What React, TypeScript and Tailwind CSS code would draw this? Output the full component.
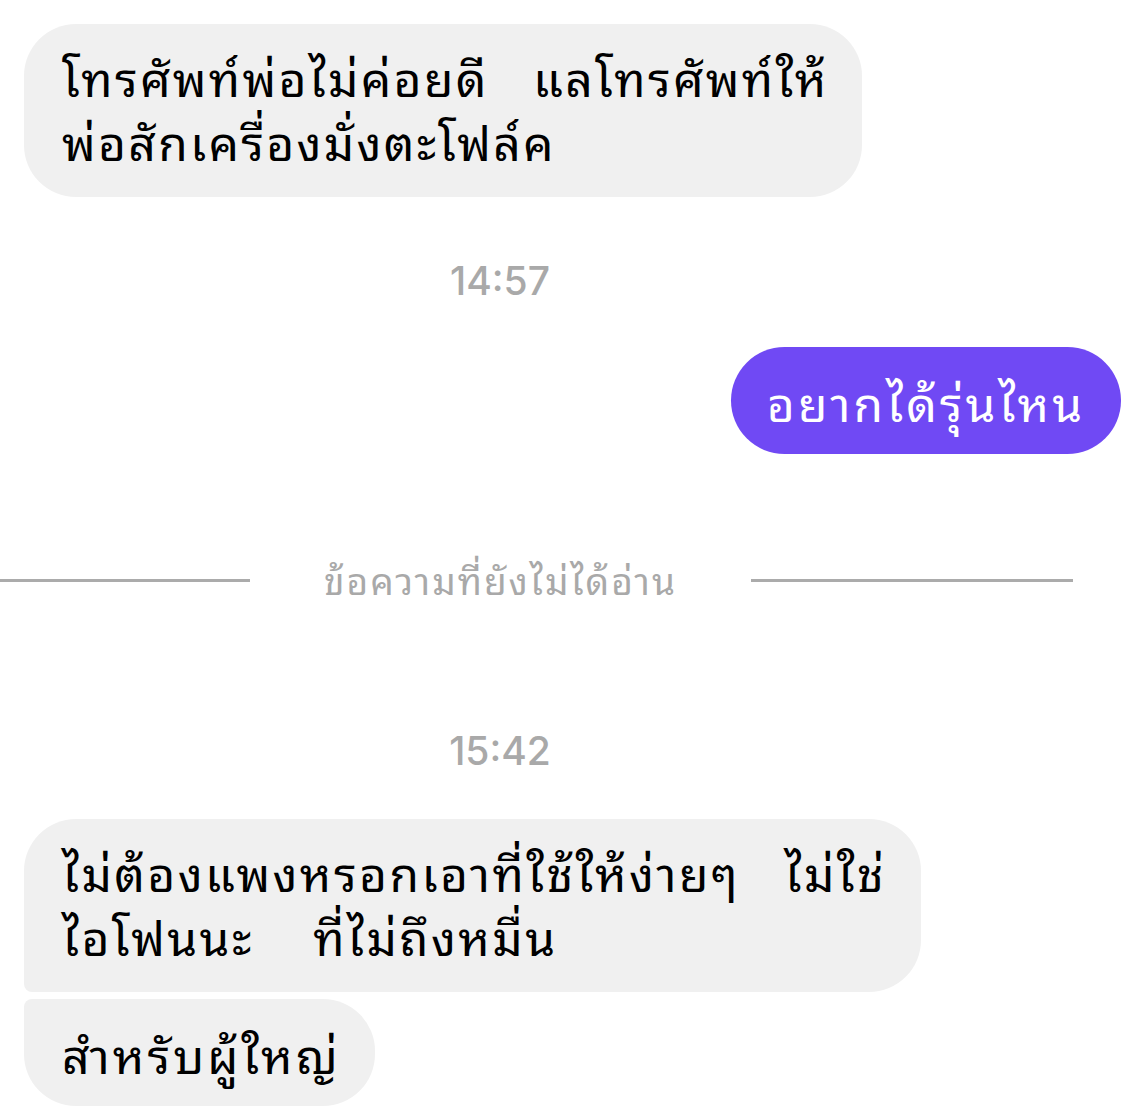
export default function App() {
  const thai = { fontFamily: '"Noto Sans Thai Looped", "Noto Serif Thai", "Noto Sans Thai", "Noto Sans", sans-serif' };
  const time = { fontFamily: 'Inter, "Liberation Sans", Arial, sans-serif' };
  return (
    <div className="w-[1146px] h-[1106px] bg-white overflow-hidden relative" style={thai}>
      <div className="pt-[24px] pl-[24px]">
        <div className="w-[838px] h-[173px] bg-[#f0f0f0] rounded-[52px] pl-[38px] pt-[20px] text-[48px] tracking-[2.3px] leading-[64px] text-black whitespace-nowrap">
          โทรศัพท์พ่อไม่ค่อยดี&nbsp;&nbsp;&nbsp;แลโทรศัพท์ให้
          <br />
          พ่อสักเครื่องมั่งตะโฟล์ค
        </div>
      </div>
      <div className="mt-[61px] text-center w-[1000px] text-[39px] font-medium text-[#a9a9a9] leading-[46px]" style={time}>
        14:57
      </div>
      <div className="mt-[43px] flex justify-end pr-[25px]">
        <div className="w-[390px] h-[107px] bg-[#7049f4] rounded-full flex items-center justify-center text-white text-[48px] tracking-[3px] whitespace-nowrap">
          อยากได้รุ่นไหน
        </div>
      </div>
      <div className="mt-[96px] flex items-center h-[60px]">
        <div className="w-[250px] h-[3px] bg-[#ababab]" />
        <div className="w-[501px] text-center text-[37px] tracking-[2px] text-[#a9a9a9] whitespace-nowrap -mt-[3px]">ข้อความที่ยังไม่ได้อ่าน</div>
        <div className="w-[322px] h-[3px] bg-[#ababab]" />
      </div>
      <div className="mt-[118px] text-center w-[1000px] text-[39px] font-medium text-[#a9a9a9] leading-[46px]" style={time}>
        15:42
      </div>
      <div className="mt-[45px] pl-[24px] flex flex-col gap-[7px]">
        <div className="w-[897px] h-[173px] bg-[#f0f0f0] rounded-[52px] rounded-bl-[8px] pl-[38px] pt-[20px] text-[48px] tracking-[2.4px] leading-[64px] text-black whitespace-nowrap">
          ไม่ต้องแพงหรอกเอาที่ใช้ให้ง่ายๆ&nbsp;&nbsp;&nbsp;ไม่ใช่
          <br />
          ไอโฟนนะ&nbsp;&nbsp;&nbsp;&nbsp;ที่ไม่ถึงหมื่น
        </div>
        <div className="w-[351px] h-[107px] bg-[#f0f0f0] rounded-[52px] rounded-tl-[8px] pl-[38px] flex items-center text-[48px] tracking-[3px] text-black whitespace-nowrap">
          สำหรับผู้ใหญ่
        </div>
      </div>
    </div>
  );
}
